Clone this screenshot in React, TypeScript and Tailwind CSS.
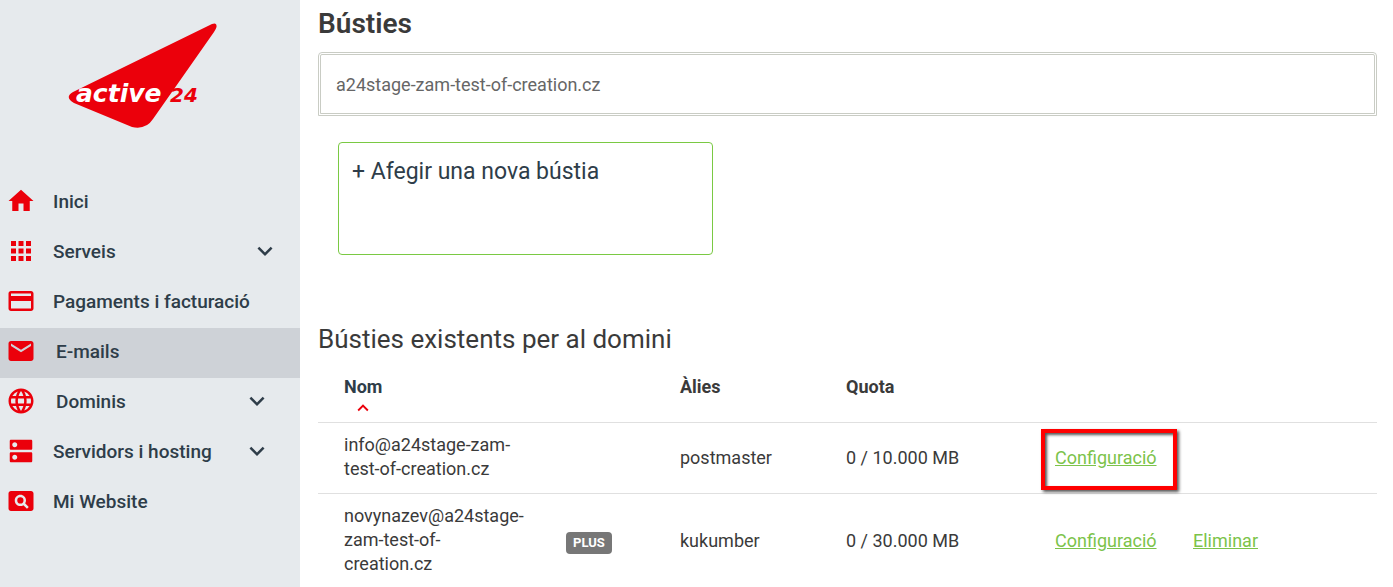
import type { ReactNode } from 'react';
import type { IconType } from 'react-icons';
import {
  MdApps,
  MdCreditCard,
  MdDns,
  MdEmail,
  MdExpandLess,
  MdExpandMore,
  MdHome,
  MdLanguage,
  MdPageview,
} from 'react-icons/md';

type NavItem = {
  label: string;
  icon: IconType;
  active?: boolean;
  indent?: boolean;
  arrow?: string;
};

const navItems: NavItem[] = [
  { label: 'Inici', icon: MdHome },
  { label: 'Serveis', icon: MdApps, arrow: 'mr-5' },
  { label: 'Pagaments i facturació', icon: MdCreditCard },
  { label: 'E-mails', icon: MdEmail, active: true, indent: true },
  { label: 'Dominis', icon: MdLanguage, indent: true, arrow: 'mr-7' },
  { label: 'Servidors i hosting', icon: MdDns, arrow: 'mr-7' },
  { label: 'Mi Website', icon: MdPageview },
];

const mailboxes = [
  {
    name: 'info@a24stage-zam-test-of-creation.cz',
    alias: 'postmaster',
    quota: '0 / 10.000 MB',
    plus: false,
    highlighted: true,
    removable: false,
  },
  {
    name: 'novynazev@a24stage-zam-test-of-creation.cz',
    alias: 'kukumber',
    quota: '0 / 30.000 MB',
    plus: true,
    highlighted: false,
    removable: true,
  },
];

function Logo() {
  return (
    <svg width="150" height="108" viewBox="67 22 150 108" role="img" aria-label="active 24">
      <path
        d="M212 24 Q217 22 216.500 27 Q216 29 214 32 L153 119 Q146 130 132 127 L74 103 Q64 97 73 92 Z"
        fill="#eb000b"
      />
      <text
        x="76"
        y="102"
        fill="#fff"
        fontFamily="DejaVu Sans"
        fontWeight="700"
        fontStyle="italic"
        fontSize="25"
      >
        active
      </text>
      <text
        x="170"
        y="102"
        fill="#eb000b"
        fontFamily="DejaVu Sans"
        fontWeight="700"
        fontStyle="italic"
        fontSize="20"
      >
        24
      </text>
    </svg>
  );
}

function ActionLink({ children }: { children: ReactNode }) {
  return (
    <a href="#" className="text-[#7cc34a] underline">
      {children}
    </a>
  );
}

function Sidebar() {
  return (
    <aside className="w-[300px] shrink-0 bg-[#e6eaed]">
      <div className="flex h-[178px] justify-center pt-[22px] pr-4">
        <Logo />
      </div>
      <nav>
        {navItems.map(({ label, icon: Icon, active, indent, arrow }) => (
          <a
            key={label}
            href="#"
            className={`flex h-[50px] items-center pb-0.5 pl-1.5 text-[19px] font-medium text-[#2e3d49] ${
              active ? 'bg-[#ced2d7]' : ''
            }`}
          >
            <Icon className="mb-0.5 size-[30px] text-[#eb000b]" />
            <span className={indent ? 'ml-5' : 'ml-[17px]'}>{label}</span>
            {arrow && <MdExpandMore className={`mb-0.5 ml-auto size-[30px] ${arrow}`} />}
          </a>
        ))}
      </nav>
    </aside>
  );
}

export default function App() {
  return (
    <div className="flex h-screen overflow-hidden bg-white font-['Roboto',sans-serif] text-lg leading-6 text-[#3a3a3a]">
      <Sidebar />

      <main className="min-w-0 flex-1 pr-4 pl-[18px]">
        <h1 className="pt-1 text-[28px] leading-10 font-semibold">Bústies</h1>
        <input
          type="text"
          aria-label="Domini"
          defaultValue="a24stage-zam-test-of-creation.cz"
          className="mt-2 block h-16 w-full rounded-t-sm border-3 border-double border-[#c9ccc4] px-[15px] text-[#666] outline-none"
        />

        {/* New mailbox */}
        <button
          type="button"
          className="mt-[26px] ml-5 flex h-[113px] w-[375px] items-start rounded border border-[#7ac943] px-[13px] pt-[13px] text-left text-[23px] leading-8 text-[#2e3d49]"
        >
          + Afegir una nova bústia
        </button>

        {/* Existing mailboxes */}
        <h2 className="mt-16 text-[26px] leading-10">
          Bústies existents per al domini
        </h2>
        <table className="mt-2.5 w-full table-fixed text-left">
          <colgroup>
            <col className="w-[236px]" />
            <col className="w-[114px]" />
            <col className="w-[166px]" />
            <col className="w-[209px]" />
            <col className="w-[138px]" />
            <col />
          </colgroup>
          <thead>
            <tr className="border-b border-[#e0e0e0] align-top leading-5 font-semibold">
              <th className="pt-2 pl-[26px]">
                <span className="block text-[#2e3d49]">Nom</span>
                <MdExpandLess className="mb-[3px] ml-2 size-[22px] text-[#eb000b]" />
              </th>
              <th />
              <th className="pt-2 pl-3">Àlies</th>
              <th className="pt-2 pl-3">Quota</th>
              <th />
              <th />
            </tr>
          </thead>
          <tbody>
            {mailboxes.map((box) => (
              <tr key={box.name} className="border-b border-[#e0e0e0]">
                <td className="pt-2.5 pr-7 pb-3 pl-[26px]">{box.name}</td>
                <td className="pl-3">
                  {box.plus && (
                    <span className="inline-block rounded bg-[#777] px-[7px] text-[13px] leading-[22px] font-bold text-white">
                      PLUS
                    </span>
                  )}
                </td>
                <td className="pl-3">{box.alias}</td>
                <td className="pl-3">{box.quota}</td>
                <td className="pl-3">
                  <span className="relative inline-block">
                    <ActionLink>Configuració</ActionLink>
                    {box.highlighted && (
                      <span className="pointer-events-none absolute -top-[17px] -right-5 -bottom-5 -left-[14px] border-4 border-[#f00] shadow-[2px_2px_3px_#000a,inset_2px_2px_3px_#000a]" />
                    )}
                  </span>
                </td>
                <td className="pl-3">{box.removable && <ActionLink>Eliminar</ActionLink>}</td>
              </tr>
            ))}
          </tbody>
        </table>
      </main>
    </div>
  );
}
